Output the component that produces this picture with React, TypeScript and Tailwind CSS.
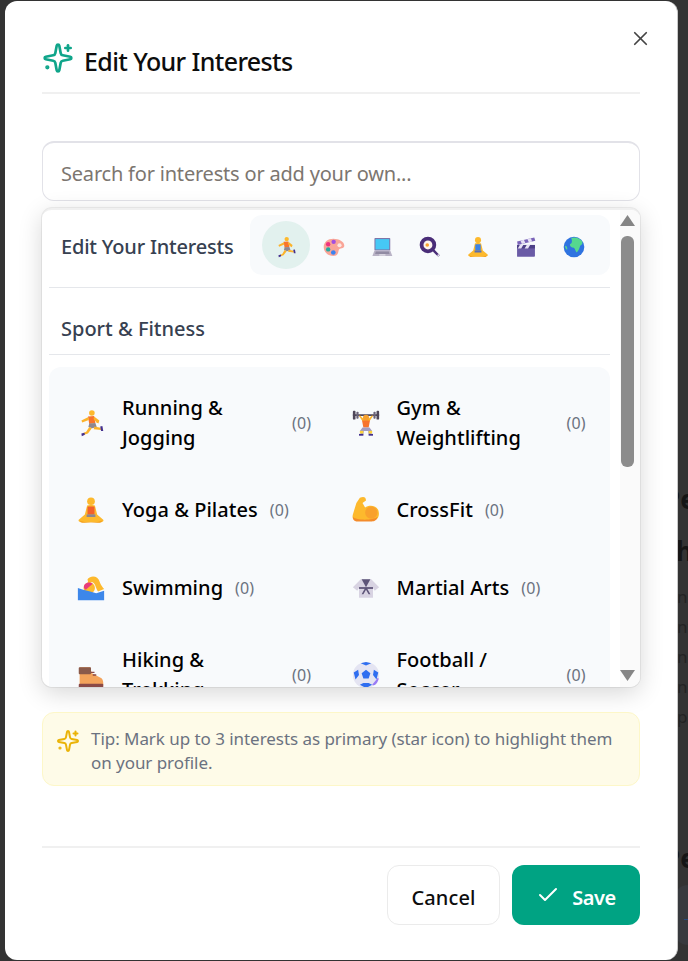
import React from "react";
import { X, Check } from "lucide-react";

type E = { size?: number };
const Svg = ({ size = 28, children }: E & { children: React.ReactNode }) => (
  <svg width={size} height={size} viewBox="0 0 32 32" fill="none">{children}</svg>
);

const Spark = ({ size, className }: { size: number; className: string }) => (
  <svg width={size} height={size} viewBox="0 0 24 24" fill="none" stroke="currentColor" strokeWidth={2} strokeLinecap="round" strokeLinejoin="round" className={className}>
    <path d="M11.017 2.814a1 1 0 0 1 1.966 0l1.051 5.558a2 2 0 0 0 1.594 1.594l5.558 1.051a1 1 0 0 1 0 1.966l-5.558 1.051a2 2 0 0 0-1.594 1.594l-1.051 5.558a1 1 0 0 1-1.966 0l-1.051-5.558a2 2 0 0 0-1.594-1.594l-5.558-1.051a1 1 0 0 1 0-1.966l5.558-1.051a2 2 0 0 0 1.594-1.594z" />
    <path d="M19.5 2.5v4" />
    <path d="M21.5 4.5h-4" />
    <circle cx="4" cy="19" r="0.6" fill="currentColor" />
  </svg>
);

const Runner = ({ size }: E) => (
  <Svg size={size}>
    <circle cx="17" cy="4.5" r="3.2" fill="#fdb92d" />
    <path d="M12.5 8.5 L19.5 8 L21 16 L14 17 Z" fill="#f8742c" />
    <path d="M13 9 L5 13 L6 15.5 L13.5 12.5 Z" fill="#fcb32b" />
    <path d="M19.5 8.5 L25.5 13 L24.5 16.5 L22 15 L19 11.5 Z" fill="#fcb32b" />
    <path d="M14 16.5 L21 16 L22.5 20.5 L17.5 22 L13 20.5 Z" fill="#8d8790" />
    <path d="M14 20.5 L10.5 26 L7 27.5 L8 29.5 L12.5 28 L17 22 Z" fill="#fcb32b" />
    <path d="M20 20 L27 21.5 L27.5 24 L19 23 Z" fill="#fcb32b" />
    <path d="M5 28 L8.5 27 L9 29.5 L5.5 31 Z" fill="#44318f" />
    <path d="M26.5 20 L29 19.5 L30 25 L27.5 25 Z" fill="#44318f" />
  </Svg>
);
const Palette = ({ size }: E) => (
  <Svg size={size}>
    <path d="M15 4 C23 4 31 8 31 14 C31 19 24 17 23 20 C22 24 22 29 15 29 C7 29 1 23 1 16 C1 9 7 4 15 4 Z" fill="#f9a598" />
    <circle cx="24" cy="13.5" r="3" fill="#fde7e2" />
    <circle cx="15.5" cy="8.5" r="3.2" fill="#a34fe0" />
    <circle cx="7.5" cy="12" r="3.2" fill="#f0327f" />
    <circle cx="7.5" cy="19.5" r="3.2" fill="#25a99f" />
    <circle cx="15" cy="24" r="3.4" fill="#3c83f0" />
  </Svg>
);
const Laptop = ({ size }: E) => (
  <Svg size={size}>
    <rect x="5" y="3" width="23" height="18" rx="1" fill="#7f75a8" />
    <rect x="6.5" y="4.5" width="20" height="15" fill="#46c8f5" />
    <path d="M5 21 H28 L31 29 H2 Z" fill="#b9b3c6" />
    <path d="M7 22.5 H26 L27 26 H6 Z" fill="#918ba3" />
    <rect x="12" y="26.5" width="9" height="2" fill="#e0dde6" />
  </Svg>
);
const Pan = ({ size }: E) => (
  <Svg size={size}>
    <circle cx="13" cy="13" r="12" fill="#4a2d78" />
    <circle cx="13" cy="13" r="6.5" fill="#fdf4ee" />
    <circle cx="12" cy="13" r="2.6" fill="#f9a12d" />
    <path d="M21 21 L28 28" stroke="#4a2d78" strokeWidth="3.5" strokeLinecap="round" />
    <circle cx="28" cy="28" r="1.3" fill="#e8e2ef" />
  </Svg>
);
const Meditate = ({ size, shirt = "#3f83e4" }: E & { shirt?: string }) => (
  <Svg size={size}>
    <circle cx="16" cy="6" r="4.4" fill="#fdb92d" />
    <path d="M11.5 11 C13 10 19 10 20.5 11 L23 21 L30 27 C31 29 29 30 26 30 H6 C3 30 1 29 2 27 L9 21 Z" fill="#fdb92d" />
    <rect x="12" y="12" width="8" height="9" rx="1" fill={shirt} />
    <rect x="11" y="21" width="10" height="3" fill={shirt === "#3f83e4" ? "#5a6eb0" : "#8d8790"} />
    <path d="M3 28 C8 31 24 31 29 28 C28 30 27 30.500 26 30.500 H6 C5 30.500 4 30 3 28 Z" fill="#f59f1c" />
  </Svg>
);
const Clapper = ({ size }: E) => (
  <Svg size={size}>
    <path d="M3 13 H29 V29 C29 30 28 30 27 30 H4 C3 30 3 30 3 29 Z" fill="#6a5ba6" />
    <rect x="3" y="13" width="26" height="5" fill="#4d3f86" />
    <path d="M3 8 L28 2 L29.5 7 L4 13 Z" fill="#7a63b8" />
    <path d="M8 7 L13 5.5 L15 10 L10 11.5 Z M18 4.500 L23 3.200 L25 8 L20 9 Z" fill="#e6e0f4" />
    <path d="M7 13 H12 L9 18 H4 Z M17 13 H22 L19 18 H14 Z" fill="#e6e0f4" />
  </Svg>
);
const Globe = ({ size }: E) => (
  <Svg size={size}>
    <circle cx="16" cy="16" r="15" fill="#2f73e0" />
    <path d="M12 3 C16 1 24 2 28 8 C29 12 27 13 25 14 C24 18 22 22 20 24 C18 22 18 19 16 17 C12 17 10 15 10 12 C13 11 14 8 12 3 Z" fill="#55d88f" />
    <path d="M3 14 C5 14 7 16 6 20 C4 19 3 17 3 14 Z" fill="#55d88f" />
  </Svg>
);
const Lifter = ({ size }: E) => (
  <Svg size={size}>
    <rect x="1" y="6" width="30" height="2" fill="#4f4759" />
    <rect x="1" y="2" width="3" height="10" rx="1" fill="#4f4759" />
    <rect x="5" y="3" width="2.5" height="8" rx="1" fill="#6c6478" />
    <rect x="28" y="2" width="3" height="10" rx="1" fill="#4f4759" />
    <rect x="24.5" y="3" width="2.5" height="8" rx="1" fill="#6c6478" />
    <path d="M9 7 L8 8 L12 14 H20 L24 8 L23 7 L19 11 H13 Z" fill="#fcb32b" />
    <circle cx="16" cy="10" r="3.5" fill="#f6a12e" />
    <path d="M11.5 13 H20.5 L19 21 H13 Z" fill="#f8742c" />
    <path d="M12 21 H20 L23 25 L22 29 H19 L18.5 25 H13.5 L13 29 H10 L9 25 Z" fill="#a49dc0" />
    <rect x="9" y="25" width="4" height="3" fill="#fcd13a" />
    <rect x="19" y="25" width="4" height="3" fill="#fcd13a" />
    <rect x="8" y="28.5" width="5" height="2" fill="#44318f" />
    <rect x="19" y="28.5" width="5" height="2" fill="#44318f" />
  </Svg>
);
const Swimmer = ({ size }: E) => (
  <Svg size={size}>
    <path d="M12 6 C16 1 24 2 26 9 C27 12 29 15 31 17 L24 20 C21 15 21 10 17 9 L13 11 Z" fill="#fdb92d" />
    <circle cx="14" cy="16" r="6.5" fill="#fdb92d" />
    <path d="M8 16 C7 11 13 8 18 11 L10 18 Z" fill="#e73b7d" />
    <path d="M1 16 L7 18 L15 20 L22 22 L31 19 V30 H1 Z" fill="#3d87ea" />
  </Svg>
);
const Muscle = ({ size }: E) => (
  <Svg size={size}>
    <path d="M9 2 C13 0 16 1 16 5 L12 8 L15 13 C19 10 27 10 30 16 C32 22 30 28 24 28 H5 C1 28 0 25 1 21 L5 8 Z" fill="#fdb92d" />
    <circle cx="22" cy="19" r="7" fill="#f9a12d" />
    <path d="M1 24 C5 28 24 28 29 24 C28 29 24 29 23 29 H5 C3 29 1 27 1 24 Z" fill="#f48b2c" />
  </Svg>
);
const Gi = ({ size }: E) => (
  <Svg size={size}>
    <path d="M10 6 H22 L31 15 L26 19 L24 16 V27 H8 V16 L6 19 L1 15 Z" fill="#d8d3e2" />
    <path d="M11 6 L16 15 L21 6 Z" fill="#5d5478" />
    <rect x="8" y="15" width="16" height="2" fill="#5d5478" />
    <path d="M15 16 L11 23 H13 L16 18 L19 23 H21 L17 16 Z" fill="#5d5478" />
  </Svg>
);
const Boot = ({ size }: E) => (
  <Svg size={size}>
    <path d="M3 7 H15 L17 14 L27 19 C29 20 30 22 30 25 V28 H3 Z" fill="#f3a35b" />
    <rect x="2" y="7" width="14" height="8" rx="1" fill="#8a5a4a" />
    <path d="M16 13 H20 M18 16 H22" stroke="#8a4a47" strokeWidth="1.5" />
    <rect x="2" y="26" width="28" height="6" rx="1" fill="#8a4a47" />
  </Svg>
);
const Ball = ({ size }: E) => (
  <Svg size={size}>
    <circle cx="16" cy="16" r="15" fill="#e4e4f2" />
    <path d="M16 10 L21 14 L19 20 H13 L11 14 Z" fill="#2f6ef0" />
    <path d="M10 2.5 L16 5 L22 2.5 L16 1 Z M2 13 L7 10 L8 16 L4 21 Z M30 13 L25 10 L24 16 L28 21 Z M9 27 L13 25 H19 L23 27 L16 31 Z" fill="#2f6ef0" />
    <path d="M23 27 L28 21 C30 18 31 20 30 22 C28 27 25 29 23 27 Z" fill="#9a7cf5" />
  </Svg>
);

const Item = ({ icon, label }: { icon: React.ReactNode; label: string }) => (
  <div className="flex items-center gap-[17px] pl-4 pr-[11px] py-3">
    <span className="flex h-[42px] w-7 shrink-0 items-center justify-center">{icon}</span>
    <div className="flex min-w-0 flex-1 items-center gap-3">
      <span className="max-w-[158px] text-[20px] leading-[30px] font-medium text-black tracking-[0.04px]">{label}</span>
      <span className="shrink-0 text-[16px] leading-6 text-[#6b7280] tracking-[0.1px]">(0)</span>
    </div>
  </div>
);

const cats = [Runner, Palette, Laptop, Pan, Meditate, Clapper, Globe];

export default function App() {
  return (
    <div className="relative h-[961px] w-[688px] overflow-hidden bg-[#333333] font-['Noto_Sans',sans-serif]">
      <div className="flex flex-col whitespace-nowrap pl-[664px] pt-[479px] text-[#151515]">
        <div className="text-[26px] leading-[40px] font-bold">Pe</div>
        <div className="mt-3 pl-[12px] text-[26px] leading-[40px] font-bold">h</div>
        <div className="mt-[11px] flex flex-col pl-[13px] text-[17px] leading-[30px] text-[#232323]">
          <span>n</span><span>nt</span><span>nr</span><span>n</span><span>p</span>
        </div>
        <div className="mt-[106px] text-[26px] leading-[40px] font-bold">Pe</div>
        <div className="mt-[7px] ml-[10px] flex h-[60px] items-center rounded-l-[16px] bg-[#383a3e] pl-[10px]">
          <span className="mt-[8px] h-px w-[6px] bg-[#27497c]" />
        </div>
      </div>

      <div className="absolute left-[5px] top-[1px] flex h-[959px] w-[673px] flex-col rounded-[12px] border-r border-[#c9c9c9] bg-white">
        <div className="relative mx-[37px] mt-[39px] flex h-[54px] shrink-0 items-start gap-[10px] border-b-2 border-[#f0f0f0]">
          <Spark size={32} className="mt-[2px] text-[#0fa58a]" />
          <h2 className="text-[25px] leading-[42px] font-medium text-[#0d0d0d] tracking-[-0.62px]">Edit Your Interests</h2>
          <button className="absolute right-[-12px] top-[-13px] text-[#444444]"><X size={23} strokeWidth={1.8} /></button>
        </div>

        <div className="mx-[37px] mt-[47px] flex h-[60px] shrink-0 items-center rounded-[12px] border border-t-2 border-[#e2e2e8] bg-white pl-[18px] pt-1 text-[20px] text-[#7c7670] tracking-[-0.2px]">
          Search for interests or add your own...
        </div>

        <div className="mx-[37px] mt-[7px] flex h-[479px] shrink-0 overflow-hidden rounded-[10px] border-t-2 border-[#f0f0f0] bg-white shadow-[0_6px_24px_rgba(0,0,0,0.16),0_0_0_1px_#f0f0f0]">
          <div className="ml-[7px] flex w-[561px] shrink-0 flex-col overflow-hidden pt-[5px]">
            <div className="flex h-[73px] shrink-0 items-start justify-between border-b border-[#e5e7eb]">
              <span className="pl-3 pt-[17px] text-[20px] leading-[30px] font-medium text-[#374151] tracking-[-0.2px]">Edit Your Interests</span>
              <div className="flex h-[60px] w-[360px] items-center rounded-[12px] bg-[#f8fafc] px-3">
                {cats.map((C, i) => (
                  <span key={i} className={i === 0 ? "flex h-12 w-12 items-center justify-center rounded-full bg-[#e2f1ee] pt-1" : "flex h-12 w-12 items-center justify-center pt-1"}>
                    <C size={22} />
                  </span>
                ))}
              </div>
            </div>
            <div className="flex h-[67px] shrink-0 items-start border-b border-[#e5e7eb] pl-3 pt-[26px] text-[20px] leading-[30px] font-medium text-[#374151]">Sport &amp; Fitness</div>
            <div className="mt-3 grid shrink-0 grid-cols-2 gap-x-3 gap-y-3 rounded-t-[12px] bg-[#f8fafc] px-3 pt-[14px] pb-4">
              <Item icon={<Runner />} label="Running & Jogging" />
              <Item icon={<Lifter />} label="Gym & Weightlifting" />
              <Item icon={<Meditate shirt="#f2602b" />} label="Yoga & Pilates" />
              <Item icon={<Muscle />} label="CrossFit" />
              <Item icon={<Swimmer />} label="Swimming" />
              <Item icon={<Gi />} label="Martial Arts" />
              <Item icon={<Boot size={30} />} label="Hiking & Trekking" />
              <Item icon={<Ball />} label="Football / Soccer" />
            </div>
          </div>
          <div className="ml-[10px] flex w-5 shrink-0 flex-col items-center bg-[#fafafa] pr-[5px] pt-[5px]">
            <svg className="shrink-0" width="15" height="11" viewBox="0 0 15 11" fill="#858585"><path d="M7.5 0 L15 11 H0 Z" /></svg>
            <div className="mt-[10px] h-[231px] w-[13px] shrink-0 rounded-[6px] bg-[#8c8c8c]" />
            <svg className="mt-[203px] shrink-0" width="15" height="11" viewBox="0 0 15 11" fill="#858585"><path d="M0 0 H15 L7.5 11 Z" /></svg>
          </div>
        </div>

        <div className="mx-[37px] mt-[25px] flex h-[74px] shrink-0 items-start gap-[11px] rounded-[12px] border border-[#fdf7c8] bg-[#fefbe8] pl-[13px] pt-[14px]">
          <Spark size={24} className="mt-[2px] shrink-0 text-[#eab308]" />
          <p className="w-[530px] text-[17px] leading-6 text-[#6b7280] tracking-[-0.05px]">Tip: Mark up to 3 interests as primary (star icon) to highlight them on your profile.</p>
        </div>

        <div className="mx-[37px] mt-[60px] flex justify-end gap-3 border-t-2 border-[#f0f0f0] pt-[17px]">
          <button className="h-[60px] w-[113px] rounded-[12px] border border-[#ebebeb] bg-white pt-[5px] text-[20px] font-medium text-[#0d0d0d] tracking-[0.1px]">Cancel</button>
          <button className="flex h-[60px] w-[128px] items-center justify-center gap-[12px] rounded-[12px] bg-[#00a383] pt-[5px] text-[20px] font-semibold text-white tracking-[-0.4px]">
            <Check size={24} strokeWidth={2} className="-mt-[6px]" />Save
          </button>
        </div>
      </div>
    </div>
  );
}
